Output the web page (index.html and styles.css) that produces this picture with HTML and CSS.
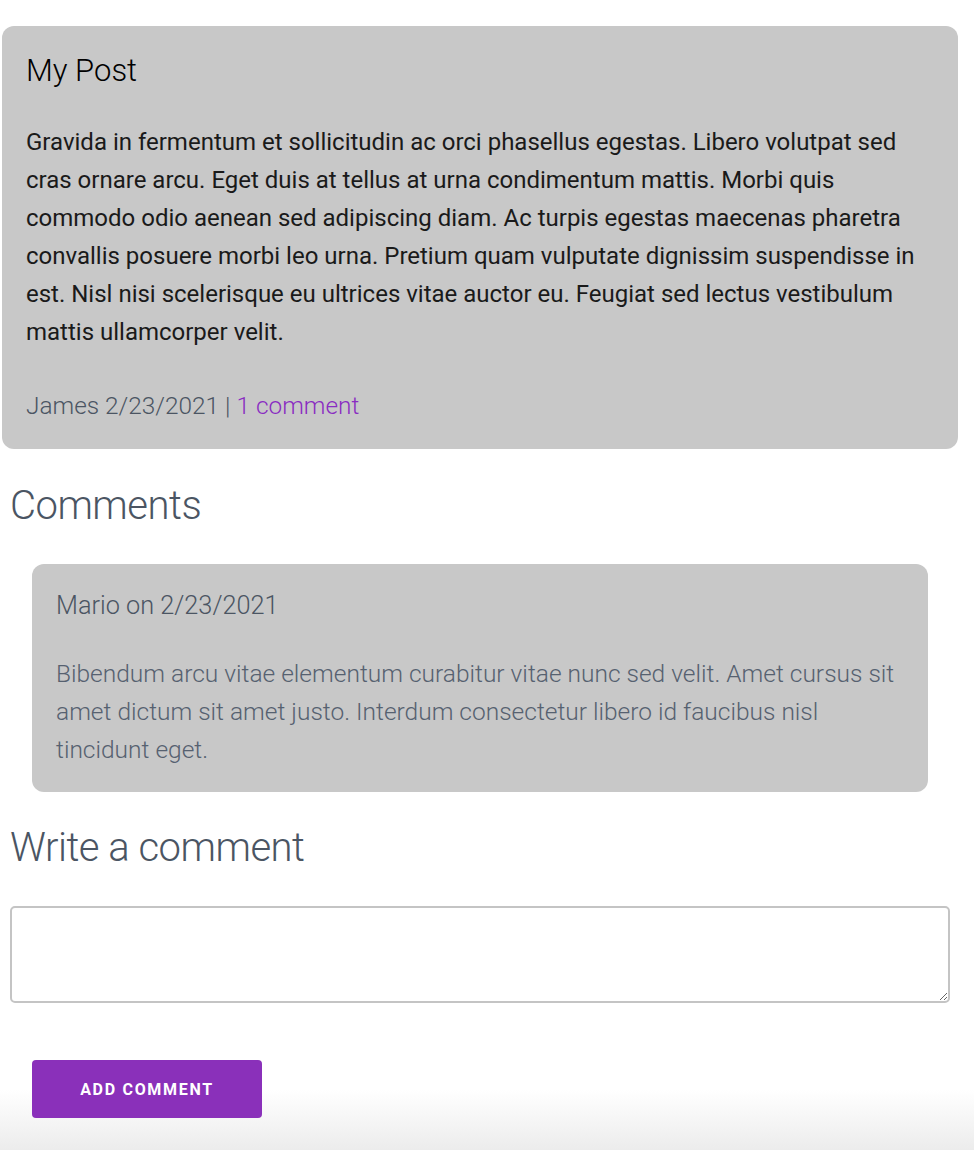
FILE: index.html
```html
<!DOCTYPE html>
<html lang="en">
<head>
<meta charset="utf-8">
<title>My Post</title>
<link rel="stylesheet" href="styles.css">
</head>
<body>
<main class="page">
  <article class="post">
    <h1 class="post-title">My Post</h1>
    <p class="post-body">Gravida in fermentum et sollicitudin ac orci phasellus egestas. Libero volutpat sed cras ornare arcu. Eget duis at tellus at urna condimentum mattis. Morbi quis commodo odio aenean sed adipiscing diam. Ac turpis egestas maecenas pharetra convallis posuere morbi leo urna. Pretium quam vulputate dignissim suspendisse in est. Nisl nisi scelerisque eu ultrices vitae auctor eu. Feugiat sed lectus vestibulum mattis ullamcorper velit.</p>
    <p class="post-meta">James 2/23/2021 | <a class="comment-link" href="#comments">1 comment</a></p>
  </article>

  <section class="comments" id="comments">
    <h2 class="section-title">Comments</h2>
    <div class="comment">
      <h3 class="comment-author">Mario on 2/23/2021</h3>
      <p class="comment-body">Bibendum arcu vitae elementum curabitur vitae nunc sed velit. Amet cursus sit amet dictum sit amet justo. Interdum consectetur libero id faucibus nisl tincidunt eget.</p>
    </div>
  </section>

  <section class="write">
    <h2 class="section-title">Write a comment</h2>
    <textarea class="comment-input"></textarea>
    <button class="add-btn" type="button">ADD COMMENT</button>
  </section>
</main>
</body>
</html>
```

FILE: styles.css
```css
html, body {
  margin: 0;
  padding: 0;
}
body {
  font-family: Roboto, "Liberation Sans", sans-serif;
  background: #fff;
  min-height: 1150px;
  background-image: linear-gradient(to bottom, rgba(255,255,255,0) 1090px, #ececec 1150px);
  background-repeat: no-repeat;
}
.page {
  width: 956px;
  padding: 26px 0 0 2px;
}
.post {
  background: #c8c8c8;
  border-radius: 12px;
  padding: 25px 24px 24px 24px;
}
.post-title {
  margin: 0;
  font-weight: 300;
  font-size: 31px;
  line-height: 40px;
  color: #000;
}
.post-body {
  margin: 32px 0 0;
  font-size: 24px;
  line-height: 38px;
  font-weight: 400;
  color: #1a1a1a;
}
.post-meta {
  margin: 36px 0 0;
  font-size: 24.4px;
  line-height: 38px;
  font-weight: 300;
  color: #4b5563;
}
.comment-link {
  color: #8a2cc2;
  text-decoration: none;
}
.section-title {
  margin: 0;
  padding-left: 8px;
  font-weight: 300;
  font-size: 40px;
  line-height: 56px;
  color: #4b5563;
  letter-spacing: -0.5px;
}
.comments {
  padding-top: 29px;
}
.comment {
  margin: 30px 30px 0 30px;
  background: #c8c8c8;
  border-radius: 12px;
  padding: 26px 24px 23px;
}
.comment-author {
  margin: 0;
  font-weight: 300;
  font-size: 25.3px;
  line-height: 32px;
  color: #4b5563;
}
.comment-body {
  margin: 33px 0 0;
  font-size: 24.5px;
  line-height: 38px;
  font-weight: 300;
  color: #566170;
}
.write {
  padding-top: 28px;
  display: flex;
  flex-direction: column;
  align-items: flex-start;
}
.comment-input {
  box-sizing: border-box;
  margin: 30px 0 0 8px;
  width: 940px;
  height: 97px;
  border: 2px solid #c4c4c4;
  border-radius: 5px;
  resize: vertical;
  font-family: inherit;
  font-size: 16px;
}
.add-btn {
  margin: 57px 0 0 30px;
  width: 230px;
  height: 58px;
  background: #8a30ba;
  color: #fff;
  border: none;
  border-radius: 4px;
  font-family: Roboto, "Liberation Sans", sans-serif;
  font-weight: 700;
  font-size: 16px;
  letter-spacing: 1.7px;
}
```
